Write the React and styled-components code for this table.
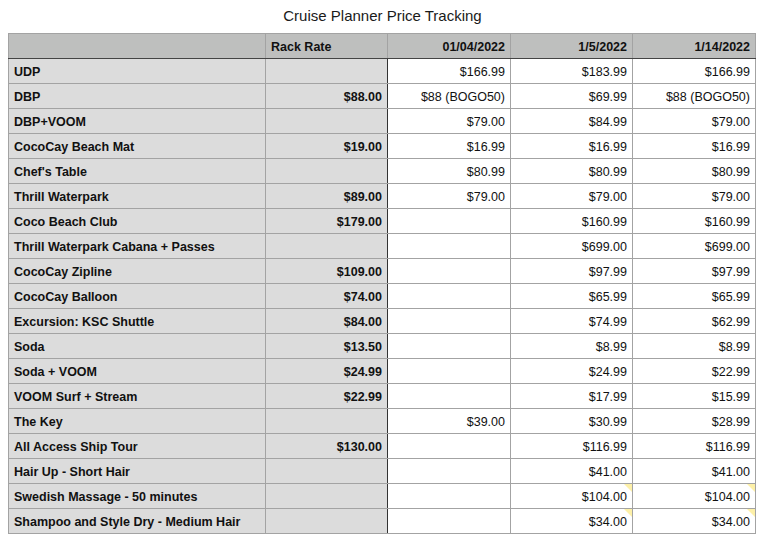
import React from 'react';
import styled, { createGlobalStyle } from 'styled-components';

const GlobalStyle = createGlobalStyle`
  body {
    margin: 0;
    background: #fff;
    font-family: "Liberation Sans", Arial, sans-serif;
    color: #111;
  }
`

const Page = styled.div`
  padding: 0 8px;
`

const Title = styled.div`
  height: 33px;
  line-height: 32px;
  text-align: center;
  font-size: 15px;
  color: #1a1a1a;
`

const Sheet = styled.table`
  border-collapse: collapse;
  table-layout: fixed;
  width: 748px;
  font-size: 12.5px;
`

const Cell = styled.td`
  position: relative;
  height: 23px;
  padding: 1px 5px 0;
  border: 1px solid #a3a3a3;
  white-space: nowrap;
  overflow: hidden;
  text-align: right;
`

const HeadCell = styled(Cell).attrs(() => ({ as: 'th' }))`
  height: 23px;
  background: #bebfbe;
  font-weight: bold;
  text-align: ${({ $left }) => ($left ? 'left' : 'right')};
  border-bottom: 1px solid #444;
`

const LabelCell = styled(Cell)`
  background: #dcdcdc;
  font-weight: bold;
  text-align: left;
`

const RateCell = styled(Cell)`
  background: #dcdcdc;
  font-weight: bold;
  border-right: 1px solid #333;
`

const PriceCell = styled(Cell)`
  background: #fff;
`

const Note = styled.span`
  position: absolute;
  top: 0;
  right: 0;
  width: 0;
  height: 0;
  border-top: 8px solid #fdf0a8;
  border-left: 8px solid transparent;
`

const columns = ['', 'Rack Rate', '01/04/2022', '1/5/2022', '1/14/2022']
const widths = [257, 122, 123, 122, 123]

const rows = [
  ['UDP', '', '$166.99', '$183.99', '$166.99'],
  ['DBP', '$88.00', '$88 (BOGO50)', '$69.99', '$88 (BOGO50)'],
  ['DBP+VOOM', '', '$79.00', '$84.99', '$79.00'],
  ['CocoCay Beach Mat', '$19.00', '$16.99', '$16.99', '$16.99'],
  ["Chef's Table", '', '$80.99', '$80.99', '$80.99'],
  ['Thrill Waterpark', '$89.00', '$79.00', '$79.00', '$79.00'],
  ['Coco Beach Club', '$179.00', '', '$160.99', '$160.99'],
  ['Thrill Waterpark Cabana + Passes', '', '', '$699.00', '$699.00'],
  ['CocoCay Zipline', '$109.00', '', '$97.99', '$97.99'],
  ['CocoCay Balloon', '$74.00', '', '$65.99', '$65.99'],
  ['Excursion: KSC Shuttle', '$84.00', '', '$74.99', '$62.99'],
  ['Soda', '$13.50', '', '$8.99', '$8.99'],
  ['Soda + VOOM', '$24.99', '', '$24.99', '$22.99'],
  ['VOOM Surf + Stream', '$22.99', '', '$17.99', '$15.99'],
  ['The Key', '', '$39.00', '$30.99', '$28.99'],
  ['All Access Ship Tour', '$130.00', '', '$116.99', '$116.99'],
  ['Hair Up - Short Hair', '', '', '$41.00', '$41.00'],
  ['Swedish Massage - 50 minutes', '', '', '$104.00', '$104.00', true],
  ['Shampoo and Style Dry - Medium Hair', '', '', '$34.00', '$34.00', true],
]

const App = () => {
  return (
    <Page>
      <GlobalStyle />
      <Title>Cruise Planner Price Tracking</Title>
      <Sheet>
        <colgroup>
          {widths.map((w, i) => <col key={i} style={{ width: w }} />)}
        </colgroup>
        <thead>
          <tr>
            {columns.map((c, i) => <HeadCell key={i} $left={i < 2}>{c}</HeadCell>)}
          </tr>
        </thead>
        <tbody>
          {rows.map(([label, rate, a, b, c, noted]) => (
            <tr key={label}>
              <LabelCell>{label}</LabelCell>
              <RateCell>{rate}</RateCell>
              <PriceCell>{a}</PriceCell>
              <PriceCell>{b}{noted && <Note />}</PriceCell>
              <PriceCell>{c}{noted && <Note />}</PriceCell>
            </tr>
          ))}
        </tbody>
      </Sheet>
    </Page>
  )
}

export default App;
